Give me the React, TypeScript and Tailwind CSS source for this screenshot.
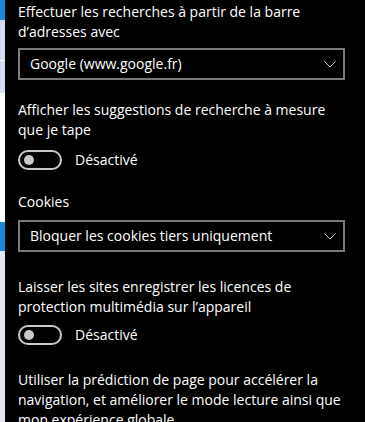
const font = { fontFamily: '"Open Sans", "Noto Sans", sans-serif' };

function Select({ label }: { label: string }) {
  return (
    <div className="flex h-[32px] items-center justify-between border-2 border-[#7a7a7a] pl-[10px] pr-[7px]">
      <span className="text-[14px] leading-[20px] text-white">{label}</span>
      <svg width="12" height="7" viewBox="0 0 12 7" fill="none" className="text-[#c8c8c8]">
        <path d="M0.5 0.5 L6 6 L11.5 0.5" stroke="currentColor" strokeWidth="1" />
      </svg>
    </div>
  );
}

function Toggle() {
  return (
    <div className="flex items-center gap-[13px]">
      <div className="flex h-[20px] w-[44px] items-center rounded-full border-2 border-[#c8c8c8] pl-[4px]">
        <div className="h-[10px] w-[10px] rounded-full bg-[#c8c8c8]" />
      </div>
      <span className="text-[14px] leading-[20px] text-white">Désactivé</span>
    </div>
  );
}

export default function App() {
  return (
    <div className="flex h-[422px] w-[365px] overflow-hidden bg-black" style={font}>
      {/* page behind the flyout */}
      <div className="flex w-[5px] shrink-0 flex-col">
        <div className="h-[20px] bg-[#1a8ad8]" />
        <div className="h-[40px] bg-[#d4dcef]" />
        <div className="h-[1px] bg-white" />
        <div className="h-[32px] bg-[#d4dcef]" />
        <div className="h-[129px] bg-white" />
        <div className="h-[29px] bg-[#1a8ad8]" />
        <div className="flex-1 bg-[#e4e6f3]" />
      </div>

      <div className="flex-1 pl-[13px] pr-[20px] pt-[2px] text-[14px] leading-[20px] text-white">
        <p>Effectuer les recherches à partir de la barre d’adresses avec</p>
        <div className="mt-[6px]">
          <Select label="Google (www.google.fr)" />
        </div>

        <p className="mt-[20px]">Afficher les suggestions de recherche à mesure que je tape</p>
        <div className="mt-[10px]">
          <Toggle />
        </div>

        <p className="mt-[22px]">Cookies</p>
        <div className="mt-[8px]">
          <Select label="Bloquer les cookies tiers uniquement" />
        </div>

        <p className="mt-[25px]">Laisser les sites enregistrer les licences de protection multimédia sur l’appareil</p>
        <div className="mt-[8px]">
          <Toggle />
        </div>

        <p className="mt-[25px]">
          Utiliser la prédiction de page pour accélérer la navigation, et améliorer le mode lecture ainsi que mon expérience globale
        </p>
      </div>
    </div>
  );
}
